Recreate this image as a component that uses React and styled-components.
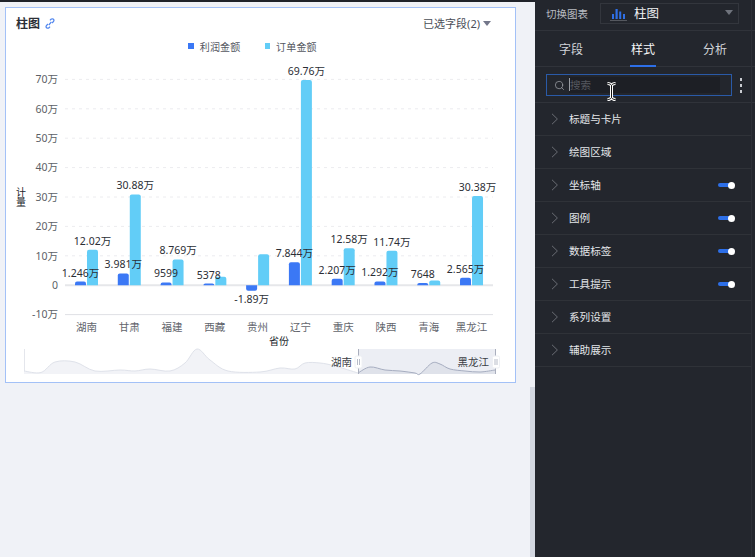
import React from 'react';
import styled, { createGlobalStyle } from 'styled-components';
import { Search } from 'lucide-react';

const Global = createGlobalStyle`
  html, body { margin: 0; padding: 0; height: 100%; overflow: hidden; }
  body { font-family: "Noto Sans", "Noto Sans CJK SC", sans-serif; background: #f0f2f7; }
  #root { height: 100%; }
`;

const Page = styled.div`
  width: 755px; height: 557px; display: flex; overflow: hidden; position: relative;
`;
const Main = styled.main`
  width: 535px; display: flex; flex-direction: column; background: #f0f2f7;
`;
const TopStrip = styled.div`height: 2px; background: #20232a;`;
const MainBody = styled.div`flex: 1; display: flex; min-height: 0;`;
const Canvas = styled.div`flex: 1; padding: 5px 0 0 5px;`;
const ScrollTrack = styled.div`
  width: 5px; background: #eef0f5; padding-top: 385px; display: flex;
`;
const ScrollThumb = styled.div`flex: 1; background: #d3d7e0;`;
const Card = styled.section`
  width: 511px; height: 376px; box-sizing: border-box; background: #fff;
  border: 1px solid #a3c1f7; display: flex; flex-direction: column;
`;
const CardHead = styled.header`
  height: 29px; box-sizing: border-box; padding: 2px 24px 0 10px; display: flex; align-items: center; gap: 5px;
`;
const CardTitle = styled.h2`
  margin: 0; font-size: 12px; font-weight: 700; color: #2b2f36; line-height: 16px;
`;
const Fields = styled.div`
  margin-left: auto; display: flex; align-items: center; gap: 2px;
  font-size: 11px; color: #4a4e57; line-height: 14px;
`;
const Caret = styled.span`
  width: 0; height: 0; margin-left: 1px; border-left: 4px solid transparent; border-right: 4px solid transparent;
  border-top: 5px solid #73778a;
`;
const Legend = styled.div`
  height: 18px; box-sizing: border-box; display: flex; justify-content: center; gap: 24px; padding: 0 16px 0 0;
`;
const LegendItem = styled.div`
  display: flex; align-items: center; gap: 6px; font-size: 10px; color: #54575f; letter-spacing: .2px;
`;
const Swatch = styled.span`width: 5.5px; height: 5.5px; background: ${p => p.$c};`;
const ChartSvg = styled.svg`display: block; width: 509px; height: 327px;`;

const Side = styled.aside`
  width: 220px; background: #23262d; display: flex; flex-direction: column; position: relative; color: #e6e8ec;
  &::after { content: ""; position: absolute; top: 0; bottom: 0; right: 3.5px; width: 1px; background: #2c2f36; }
`;
const SwitchRow = styled.div`
  height: 31px; box-sizing: border-box; padding: 2px 16px 6px 11px; display: flex; align-items: center; gap: 12px;
  border-bottom: 1px solid #30333a; font-size: 10.5px; color: #b9bcc3;
`;
const SelectBox = styled.div`
  width: 139px; height: 21px; box-sizing: border-box; border: 1px solid #33363d; display: flex; align-items: center;
  padding: 0 5px 1px 8px; gap: 7px; font-size: 12.5px; color: #f0f1f4;
`;
const SelCaret = styled(Caret)`margin-left: auto; border-top-color: #6f737c;`;
const Tabs = styled.nav`
  height: 36px; box-sizing: border-box; display: grid; grid-template-columns: repeat(3, 72px); justify-content: start;
  border-bottom: 1px solid #30333a;
`;
const Tab = styled.div`
  position: relative; display: flex; align-items: center; justify-content: center; font-size: 12px; padding-top: 1px;
  color: ${p => p.$on ? '#f6f7f8' : '#d2d4d9'};
  ${p => p.$on ? `&::after { content: ""; position: absolute; bottom: -1px; left: 23px; width: 26px; height: 2px; background: #2d6fe8; }` : ''}
`;
const SearchRow = styled.div`
  height: 36px; box-sizing: border-box; padding: 7px 8px 7px 11px; display: flex; align-items: flex-start; gap: 8px;
  border-bottom: 1px solid #30333a;
`;
const SearchBox = styled.div`
  width: 186px; height: 22px; box-sizing: border-box; border: 1px solid #2a5aa8; display: flex; align-items: center;
  padding: 2px 11px 2px 7px; background: #23262d; gap: 4px;
`;
const SearchInner = styled.div`
  flex: 1; height: 100%; box-sizing: border-box; padding-bottom: 1px; background: #1d1f25; display: flex; align-items: center;
  font-size: 10.5px; color: #55585f;
  &::before { content: ""; width: 1px; height: 13px; background: #9a9da3; }
`;
const Dots = styled.div`
  display: flex; flex-direction: column; gap: 3px; padding-top: 4px;
  span { width: 2px; height: 3px; background: #c8cbd0; }
`;
const Row = styled.div`
  height: 33px; box-sizing: border-box; display: flex; align-items: center; padding: 0 17px 0 16px;
  border-bottom: 1px solid #2f3238; font-size: 10.6px; color: #e4e6ea; gap: 10px; margin-right: 4px;
`;
const RowLabel = styled.span`flex: 1; margin-top: -2px;`;
const Toggle = styled.span`
  position: relative; width: 16px; height: 4px; background: #2d6fe8; border-radius: 2px;
  &::after { content: ""; position: absolute; right: -1px; top: -1.5px; width: 7px; height: 7px; border-radius: 50%; background: #fff; }
`;
const Cursor = styled.svg`position: absolute; left: 605px; top: 82px; width: 13px; height: 19px;`;

const G = 29.4;
const Y0 = 285.2;
const yOf = v => Y0 - v * G / 10;
const data = [
  ['湖南', 1.246, 12.02, '1.246万', '12.02万'],
  ['甘肃', 3.981, 30.88, '3.981万', '30.88万'],
  ['福建', 0.9599, 8.769, '9599', '8.769万'],
  ['西藏', 0.5378, 2.9, '5378', ''],
  ['贵州', -1.89, 10.5, '-1.89万', ''],
  ['辽宁', 7.844, 69.76, '7.844万', '69.76万'],
  ['重庆', 2.207, 12.58, '2.207万', '12.58万'],
  ['陕西', 1.292, 11.74, '1.292万', '11.74万'],
  ['青海', 0.7648, 1.6, '7648', ''],
  ['黑龙江', 2.565, 30.38, '2.565万', '30.38万'],
];
const axis = [70, 60, 50, 40, 30, 20, 10, 0, -10];

const smooth = pts => {
  let d = `M${pts[0][0]} ${pts[0][1]}`;
  for (let i = 0; i < pts.length - 1; i++) {
    const p0 = pts[i - 1] || pts[i], p1 = pts[i], p2 = pts[i + 1], p3 = pts[i + 2] || p2;
    d += ` C${p1[0] + (p2[0] - p0[0]) / 6} ${p1[1] + (p2[1] - p0[1]) / 6} ${p2[0] - (p3[0] - p1[0]) / 6} ${p2[1] - (p3[1] - p1[1]) / 6} ${p2[0]} ${p2[1]}`;
  }
  return d;
};
const leftPts = [[24,371],[41,372.5],[55,362],[75,362],[95,371],[120,370],[135,371],[150,369],[170,371],[185,363],[197,349],[210,360],[228,371],[260,372],[280,368],[295,369],[305,363],[320,363],[335,366],[358,373]];
const rightPts = [[358,373],[370,367],[385,370],[400,371],[415,373],[420,374],[432,363],[440,364],[450,369],[465,371],[480,372],[495,370]];

const BarRect = ({ x, w = 11, v, c }) => {
  const top = yOf(v);
  return v >= 0
    ? <path d={`M${x} ${Y0} V${top + 2} Q${x} ${top} ${x + 2} ${top} H${x + w - 2} Q${x + w} ${top} ${x + w} ${top + 2} V${Y0} Z`} fill={c} />
    : <path d={`M${x} ${Y0} V${top - 2} Q${x} ${top} ${x + 2} ${top} H${x + w - 2} Q${x + w} ${top} ${x + w} ${top - 2} V${Y0} Z`} fill={c} />;
};

const chartFont = '"Noto Sans", "Noto Sans CJK SC", sans-serif';
const BAR_0 = 86.5;
const STEP = 42.78;

const Chart = () => (
  <ChartSvg viewBox="6 55 509 327" fontFamily={chartFont}>
    {axis.map(a => (
      <g key={a}>
        <line x1="65" x2="493" y1={yOf(a)} y2={yOf(a)}
          stroke={a === 0 ? '#e6e7ea' : a === -10 ? '#dfe1e5' : '#ececef'}
          strokeWidth={a === 0 ? 2 : 1} strokeDasharray={a === 0 || a === -10 ? undefined : '3 4'} />
        <text x="58" y={yOf(a) + 3.8} textAnchor="end" fontSize="10.5" fill="#5c5f66">{a === 0 ? '0' : `${a}万`}</text>
      </g>
    ))}
    <text x="20.5" y="187" fontSize="10" fill="#22252b" style={{ writingMode: 'vertical-rl' }}>计量</text>
    {data.map((d, i) => {
      const cx = BAR_0 + i * STEP;
      return (
        <g key={d[0]}>
          <BarRect x={cx - 11.5} v={d[1]} c="#3b78f5" />
          <BarRect x={cx + 0.5} v={d[2]} c="#62cdf7" />
          <text x={cx} y="331" textAnchor="middle" fontSize="10.5" fill="#62656c">{d[0]}</text>
        </g>
      );
    })}
    {data.map((d, i) => {
      const cx = BAR_0 + i * STEP;
      const ly = d[1] >= 0 ? yOf(d[1]) - 5 : yOf(d[1]) + 12;
      return (
        <g key={d[0]} fontSize="10.5" fill="#2b2e35" textAnchor="middle">
          {d[4] && <text x={cx + 6} y={yOf(d[2]) - 5}>{d[4]}</text>}
          <text x={cx - 6} y={ly}>{d[3]}</text>
        </g>
      );
    })}
    <text x="279" y="345" textAnchor="middle" fontSize="10" fill="#22252b">省份</text>

    <line x1="24.5" x2="24.5" y1="349" y2="374" stroke="#e4e6ec" />
    <path d={`${smooth(leftPts)} V374 H24 Z`} fill="#f2f3f7" stroke="none" />
    <path d={smooth(leftPts)} fill="none" stroke="#dfe2ea" />
    <rect x="358" y="349" width="138" height="25" fill="#eceef4" />
    <path d={`${smooth(rightPts)} V374 H358 Z`} fill="#dfe2ea" />
    <path d={smooth(rightPts)} fill="none" stroke="#a6adc0" />
    <line x1="358.5" x2="358.5" y1="349" y2="374" stroke="#a9aebd" />
    <line x1="495.5" x2="495.5" y1="349" y2="374" stroke="#a9aebd" />
    {[355, 492.5].map(x => (
      <g key={x}>
        <rect x={x} y="356" width="7" height="12" rx="1.5" fill="#fff" stroke="#eef0f4" />
        <path d={`M${x + 2.5} 359 V365 M${x + 4.5} 359 V365`} stroke="#b8bdc9" strokeWidth="1" />
      </g>
    ))}
    <text x="352" y="366" textAnchor="end" fontSize="10.5" fill="#3b3e45">湖南</text>
    <text x="489" y="366" textAnchor="end" fontSize="10.5" fill="#3b3e45">黑龙江</text>
  </ChartSvg>
);

const LinkIcon = () => (
  <svg width="10" height="11" viewBox="0 0 10 11" fill="none" stroke="#4f85ee" strokeWidth="1.2">
    <path d="M3.8 7 L6.4 3.8 M5 2.4 L6 1.2 Q7 .4 8.2 1.1 Q9.4 2 8.7 3.2 L7.2 5 M5 8.6 L4 9.8 Q3 10.6 1.8 9.9 Q.6 9 1.3 7.8 L2.8 6" />
  </svg>
);
const BarsIcon = () => (
  <svg width="18" height="16" viewBox="0 0 18 16">
    <path d="M3 9h2v5H3zM6.5 4h2.2v10H6.5zM10.2 6.5h2v7.5h-2zM14 9h2v5h-2z" fill="#2f6fe6" />
    <path d="M1 15.5h17" stroke="#55585f" />
  </svg>
);
const Chevron = () => (
  <svg width="8" height="12" viewBox="0 0 8 12" fill="none" stroke="#6a6d74" strokeWidth="1">
    <path d="M1 .8 L6.4 6 L1 11.2" />
  </svg>
);

const rows = [
  ['标题与卡片', false], ['绘图区域', false], ['坐标轴', true], ['图例', true],
  ['数据标签', true], ['工具提示', true], ['系列设置', false], ['辅助展示', false],
];

const cursorPath = 'M2.5 1.5 C5 1.5 6 2.5 6.5 3.5 C7 2.5 8 1.5 10.5 1.5 M6.5 3.5 V15.5 M2.5 17.5 C5 17.5 6 16.5 6.5 15.5 C7 16.5 8 17.5 10.5 17.5';

export default function App() {
  return (
    <Page>
      <Global />
      <Main>
        <TopStrip />
        <MainBody>
          <Canvas>
            <Card>
              <CardHead>
                <CardTitle>柱图</CardTitle>
                <LinkIcon />
                <Fields>已选字段(2)<Caret /></Fields>
              </CardHead>
              <Legend>
                <LegendItem><Swatch $c="#3b78f5" />利润金额</LegendItem>
                <LegendItem><Swatch $c="#62cdf7" />订单金额</LegendItem>
              </Legend>
              <Chart />
            </Card>
          </Canvas>
          <ScrollTrack><ScrollThumb /></ScrollTrack>
        </MainBody>
      </Main>
      <Side>
        <SwitchRow>
          <span>切换图表</span>
          <SelectBox><BarsIcon />柱图<SelCaret /></SelectBox>
        </SwitchRow>
        <Tabs>
          <Tab>字段</Tab>
          <Tab $on>样式</Tab>
          <Tab>分析</Tab>
        </Tabs>
        <SearchRow>
          <SearchBox>
            <Search size={11} color="#a6a9af" strokeWidth={1.5} />
            <SearchInner>搜索</SearchInner>
          </SearchBox>
          <Dots><span /><span /><span /></Dots>
        </SearchRow>
        {rows.map(([t, on]) => (
          <Row key={t}>
            <Chevron />
            <RowLabel>{t}</RowLabel>
            {on && <Toggle />}
          </Row>
        ))}
      </Side>
      <Cursor viewBox="0 0 13 19" fill="none">
        <path d={cursorPath} stroke="#fff" strokeWidth="3" />
        <path d={cursorPath} stroke="#111" strokeWidth="1" />
      </Cursor>
    </Page>
  );
}
